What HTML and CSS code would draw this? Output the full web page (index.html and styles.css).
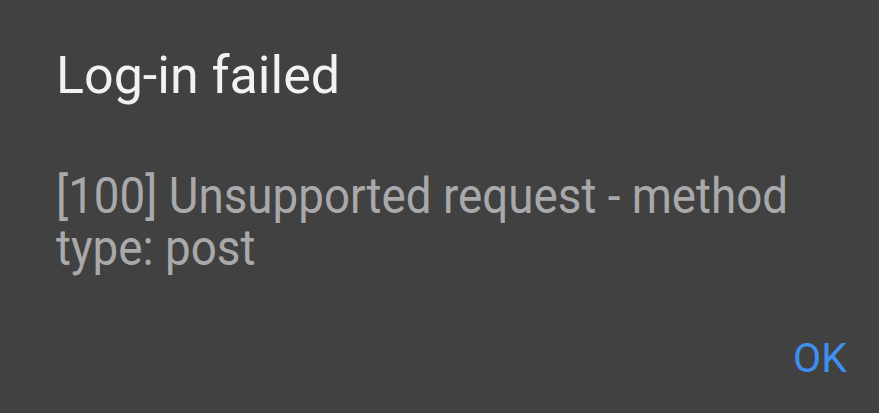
FILE: index.html
```html
<!DOCTYPE html>
<html>
<head>
<meta charset="utf-8">
<link rel="stylesheet" href="styles.css">
</head>
<body>
<div class="dialog">
  <h1 class="title">Log-in failed</h1>
  <p class="message"><span class="message-text">[100] Unsupported request - method type: post</span></p>
  <div class="actions"><span class="ok">OK</span></div>
</div>
</body>
</html>
```
FILE: styles.css
```css
html, body {
  margin: 0;
  padding: 0;
  width: 879px;
  height: 413px;
  background: #414141;
  overflow: hidden;
}
.dialog {
  box-sizing: border-box;
  width: 879px;
  height: 413px;
  padding: 46px 32px 0 56px;
  display: flex;
  flex-direction: column;
  font-family: Roboto, "Noto Sans", sans-serif;
}
.title {
  margin: 0;
  font-size: 52px;
  font-weight: 400;
  line-height: 60px;
  color: #f2f2f4;
}
.message {
  margin: 64px 0 0 0;
  height: 104px;
  font-size: 50px;
  line-height: 52px;
  color: #a9a9ab;
}
.message-text {
  display: block;
  width: 820px;
  transform: scaleX(0.915);
  transform-origin: 0 0;
}
.actions {
  display: flex;
  justify-content: flex-end;
  margin-top: 60px;
}
.ok {
  font-size: 41px;
  line-height: 48px;
  color: #3f8ff0;
}
```
